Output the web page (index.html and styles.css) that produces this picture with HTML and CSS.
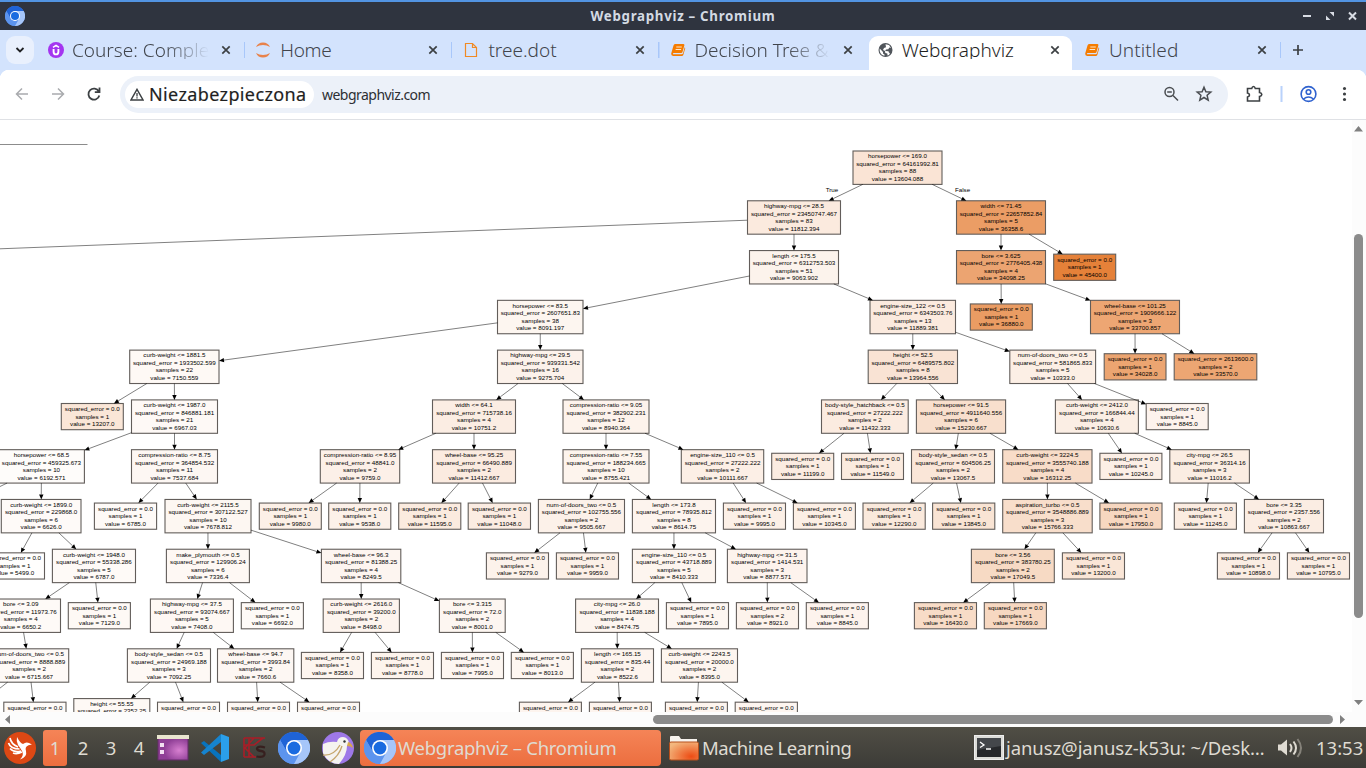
FILE: index.html
```html
<!DOCTYPE html>
<html lang="pl">
<head>
<meta charset="utf-8">
<title>Webgraphviz</title>
<link rel="stylesheet" href="styles.css">
</head>
<body>
<svg width="0" height="0" class="defs">
  <defs>
    <symbol id="chromium" viewBox="0 0 32 32">
      <circle cx="16" cy="16" r="16" fill="#669df6"/>
      <path d="M16 32A16 16 0 0 0 29.9 8H16z" fill="#a6c6fa"/>
      <path d="M2.1 8A16 16 0 0 1 29.9 8H16L9 20z" fill="#1f63d6"/>
      <path d="M2.1 8 9 20 22 21 16 32A16 16 0 0 1 2.1 8z" fill="#5c94ee"/>
      <circle cx="16" cy="16" r="8" fill="#fff"/>
      <circle cx="16" cy="16" r="6.4" fill="#1a6be0"/>
    </symbol>
    <symbol id="close" viewBox="0 0 10 10"><path d="M1.3 1.3 8.7 8.7M8.7 1.3 1.3 8.7" stroke="currentColor" stroke-width="1.7" fill="none"/></symbol>
    <symbol id="book" viewBox="0 0 16 16">
      <path d="M5 2h8.500q1.200.2.9 1.300L12.500 10q-.3 1-1.300 1H3.700q-1.300.4-.7 1.300h8.700q1 0 1.300-1l1.700-6q.8.5.4 1.500l-1.800 6.100q-.4 1.100-1.500 1.100H3.200q-2.300-.2-2-2.400L3.500 3.500Q3.900 2 5 2z" fill="#f57c00"/>
      <path d="M6.300 5h5.500M5.600 7.500h5.500" stroke="#ffe6c8" stroke-width="1"/>
    </symbol>
  </defs>
</svg>

<div class="screen">
  <header class="titlebar">
    <svg class="app-icon" width="20" height="20"><use href="#chromium"/></svg>
    <span class="window-title">Webgraphviz – Chromium</span>
    <svg class="window-buttons" width="62" height="16" viewBox="0 0 62 16" fill="none" stroke="#d8dce4">
      <path d="M4 8h8" stroke-width="2"/>
      <path d="M27 7.500v4.500h4.500zM30.500 4h4.500v4.500z" fill="#d8dce4" stroke="none"/>
      <path d="M50 4.500l7 7M57 4.500l-7 7" stroke-width="2"/>
    </svg>
  </header>

  <nav class="tabs">
    <div class="tab-search"><svg width="10" height="8" viewBox="0 0 10 8"><path d="M1.500 2 5 5.500 8.500 2" fill="none" stroke="#202124" stroke-width="1.800"/></svg></div>
    <div class="tab-list">
      <div class="tab">
        <svg class="favicon" width="16" height="16" viewBox="0 0 16 16"><circle cx="8" cy="8" r="8" fill="#a435f0"/><path d="M5.600 7v2.700q0 2.700 2.400 2.700t2.400-2.700V7" fill="none" stroke="#fff" stroke-width="1.900"/><path d="M5 5.300 8 3.400l3 1.900" fill="none" stroke="#fff" stroke-width="1.500"/></svg>
        <span class="tab-title fade">Course: Complete</span><svg class="close" width="10" height="10"><use href="#close"/></svg>
      </div>
      <div class="tab">
        <svg class="favicon" width="16" height="16" viewBox="0 0 16 16" fill="#e8824a"><path d="M1 5Q3 .5 8 .5T15 5Q12 3 8 3T1 5zM1 11q2 4.500 7 4.500t7-4.500Q12 13 8 13T1 11z"/></svg>
        <span class="tab-title tall t-home">Home</span><svg class="close" width="10" height="10"><use href="#close"/></svg>
      </div>
      <div class="tab">
        <svg class="favicon" width="16" height="16" viewBox="0 0 16 16"><path d="M3.500 1.500h7l4 4v9h-11zM10.500 1.500v4h4" fill="none" stroke="#f08a24" stroke-width="1.200"/></svg>
        <span class="tab-title tall t-dot">tree.dot</span><svg class="close" width="10" height="10"><use href="#close"/></svg>
      </div>
      <div class="tab nosep">
        <svg class="favicon" width="16" height="16"><use href="#book"/></svg>
        <span class="tab-title tall fade t-dec">Decision Tree &amp; R</span><svg class="close" width="10" height="10"><use href="#close"/></svg>
      </div>
      <div class="tab active nosep">
        <svg class="favicon" width="16" height="16" viewBox="0 0 16 16"><circle cx="8.500" cy="8" r="7" fill="#50555b"/><path d="M2.700 6.500 6 10v1.500l1.500 1v1.300Q3.500 13 2.700 9zM8.500 2.300l3.500.6 2 3-1.700-.3-1 1.600-2.300.3-.8 1.500 3.300.2.500 1.600 1 .2-1 2-1.500.5-.2-2-2-.5-.3-2-2-1 1-2 2-.7z" fill="#fff"/></svg>
        <span class="tab-title t-web">Webgraphviz</span><svg class="close" width="10" height="10"><use href="#close"/></svg>
      </div>
      <div class="tab">
        <svg class="favicon" width="16" height="16"><use href="#book"/></svg>
        <span class="tab-title tall t-unt">Untitled</span><svg class="close" width="10" height="10"><use href="#close"/></svg>
      </div>
    </div>
    <svg class="new-tab" width="12" height="12" viewBox="0 0 12 12"><path d="M6 1v10M1 6h10" stroke="#3c4043" stroke-width="1.700"/></svg>
  </nav>

  <div class="toolbar">
    <svg class="nav-icons" width="120" height="24" viewBox="0 0 120 24" fill="none" stroke-width="1.500">
      <g stroke="#a9abae"><path d="M28 12H17M22 6.500 16.500 12l5.500 5.500"/><path d="M52 12h11M58 6.500l5.500 5.500-5.500 5.500"/></g>
      <path d="M98.800 9.500A5.500 5.500 0 1 0 99.300 13.500M99.500 5.500v4.700h-4.700" stroke="#3c4043" stroke-width="1.800"/>
    </svg>
    <div class="omnibox">
      <div class="chip">
        <svg width="14" height="13" viewBox="0 0 14 13"><path d="M7 1.300 13 12H1z" fill="none" stroke="#3c4043" stroke-width="1.400"/><path d="M7 5v3.500M7 9.300v1.300" stroke="#3c4043" stroke-width="1.300"/></svg>
        <span class="chip-text">Niezabezpieczona</span>
      </div>
      <span class="url">webgraphviz.com</span>
      <svg class="omni-icons" width="50" height="18" viewBox="0 0 50 18" fill="none" stroke="#4a4d51" stroke-width="1.500">
        <circle cx="6.500" cy="7" r="4.500"/><path d="M10 10.500l5 5M4.200 7h4.600"/>
        <path d="M41 2.200 42.900 6.700 47.800 7.100 44.100 10.300 45.200 15.100 41 12.500 36.800 15.100 37.900 10.300 34.200 7.100 39.100 6.700z"/>
      </svg>
    </div>
    <svg class="ext" width="18" height="18" viewBox="0 0 18 18"><path d="M2 3.500h4.200q.6-2 1.800-2t1.800 2H14v4q2.300.5 2.300 2t-2.300 2v4.500H2v-4q2-.6 2-2.100T2 8z" fill="none" stroke="#3c4043" stroke-width="1.600"/></svg>
    <i class="bar"></i>
    <svg class="profile" width="18" height="18" viewBox="0 0 18 18" fill="none" stroke="#2f62cf" stroke-width="1.600"><circle cx="9" cy="9" r="7.400"/><circle cx="9" cy="7" r="2.300"/><path d="M4 14q5-4 10 0"/></svg>
    <svg class="menu" width="4" height="16" viewBox="0 0 4 16" fill="#3c4043"><circle cx="2" cy="2.500" r="1.600"/><circle cx="2" cy="8" r="1.600"/><circle cx="2" cy="13.500" r="1.600"/></svg>
  </div>

  <main class="page">
    <svg id="graph" class="graph" width="1352" height="592" viewBox="0 120 1352 592"></svg>
    <svg class="vscroll" width="14" height="592" viewBox="0 0 14 592"><path d="M2 11.500 6.500 6l4.500 5.500zM2 580l4.500 5 4.500-5z" fill="#808080"/><rect x="2" y="114" width="9" height="384" rx="4.500" fill="#8b8b8b"/></svg>
    <svg class="hscroll" width="1366" height="15" viewBox="0 0 1366 15"><path d="M10 3v9L5 7.500zM1340 3v9l5-4.500z" fill="#808080"/><rect x="653" y="3" width="680" height="9" rx="4.500" fill="#8b8b8b"/></svg>
  </main>

  <footer class="taskbar">
    <svg class="launcher" width="32" height="32" viewBox="0 0 32 32"><circle cx="16" cy="16" r="16" fill="#dd4814"/><path d="M14 13Q12 9 13 5q3 6 6 7 3-2.500 6-1l3 1.500-3.500.8Q20.500 15 22 19q1.500 6-6 8.500 4.500-4 2-8.500-2-3.500-4-6z" fill="#fff"/><path d="M6 6q1 6 8 9M4.500 11q2 6 11 6M6 16.500q4 4.500 11 2.500M9 21q4 1.500 9-1" fill="none" stroke="#fff" stroke-width="1.700"/></svg>
    <div class="desks"><span class="desk current">1</span><span class="desk">2</span><span class="desk">3</span><span class="desk">4</span></div>
    <div class="quick">
      <svg width="32" height="32" viewBox="0 0 32 32"><defs><radialGradient id="pg" cx=".7" cy=".6"><stop offset="0" stop-color="#d77fd0"/><stop offset="1" stop-color="#8f3f96"/></radialGradient></defs><rect x="1" y="4" width="30" height="24" fill="url(#pg)" stroke="#642c69"/><rect x="0" y="3" width="32" height="4" fill="#e9e5cf"/><path d="M3 11h4v4H3zM3 18h4v4H3z" fill="#f2dff2"/></svg>
      <svg width="28" height="28" viewBox="0 0 28 28"><path d="M0 9 3 7l17 14v7z" fill="#0873bd"/><path d="M20 0v8L3 21 0 18.500z" fill="#1684cf"/><path d="M20 0v28l8-3V3z" fill="#2b9fea"/></svg>
      <svg width="24" height="24" viewBox="0 0 24 24" fill="none"><path d="M2 2h21M2 2v19M12 2 3 12l9 9M2 9h10l9-7M7 3v18M2 21h12" stroke="#a91d27" stroke-width="1.600"/><path d="M23 11.500q-7-2-8 1 0 2 4 2.500 4 .6 3.500 3.500-1 3.500-8 2" stroke="#37201f" stroke-width="2.300"/></svg>
      <svg width="32" height="32"><use href="#chromium"/></svg>
      <svg width="32" height="32" viewBox="0 0 32 32"><circle cx="16" cy="16" r="16" fill="#9e78e8"/><path d="M1 12Q7 9 15 10q1-5 6-5 5 .5 6 6-1 2-2 3Q25 23 17 31.900 6 32 1 21z" fill="#f5f3f0"/><path d="M1 23Q12 24 18 13M8 30Q17 24 20 14" fill="none" stroke="#c5a66d" stroke-width="1.300"/><path d="M26 10q4 1 5 6-2-2-6-2z" fill="#d7a84b"/><circle cx="22.500" cy="9.500" r="1.200" fill="#333"/></svg>
    </div>
    <div class="task current"><svg width="32" height="32"><use href="#chromium"/></svg><span class="k-web">Webgraphviz – Chromium</span></div>
    <div class="task folder"><svg width="30" height="26" viewBox="0 0 30 26"><defs><radialGradient id="fg" cx=".75" cy=".8" r=".9"><stop offset="0" stop-color="#ed4c14"/><stop offset="1" stop-color="#f3b77e"/></radialGradient></defs><path d="M1 2q0-1 1-1h8l2 3h16v7H1z" fill="#f7f3ed"/><rect x=".5" y="7" width="29" height="18" rx="1.500" fill="url(#fg)" stroke="#b7501c"/></svg><span class="k-ml">Machine Learning</span></div>
    <div class="task term"><svg width="30" height="26" viewBox="0 0 30 26"><rect x=".5" y=".5" width="29" height="24" fill="#dcdcd8" stroke="#eee"/><rect x="3" y="3" width="24" height="19" fill="#26282b"/><path d="M3 3h24v8L3 15z" fill="#44474b"/><path d="M6 7l4 3-4 2.500M12 14h5" fill="none" stroke="#fff" stroke-width="1.300"/></svg><span class="k-term">janusz@janusz-k53u: ~/Desk…</span></div>
    <svg class="volume" width="26" height="22" viewBox="0 0 26 22" fill="none" stroke="#dfdbd2" stroke-width="2"><path d="M0 7.500v6h3l6 5V2.500l-6 5z" fill="#dfdbd2" stroke="none"/><path d="M12 7q3 4 0 8M15.500 4.500q5 6.500 0 13"/><path d="M19.500 2q7 9 0 18" stroke="#85827a"/></svg>
    <span class="clock">13:53</span>
  </footer>
</div>
<script src="tree.js"></script>
</body>
</html>
```

FILE: styles.css
```css
* { box-sizing: border-box; }
body { margin: 0; overflow: hidden; font-family: "Noto Sans", "Open Sans", sans-serif; }
.defs { position: absolute; }
.screen { width: 1366px; height: 768px; display: flex; flex-direction: column; background: #fff; overflow: hidden; }
svg { display: block; flex: none; }
span { white-space: nowrap; }

.titlebar { height: 30px; flex: none; border-top: 2px solid #5294e2; background: #2f343f; display: grid; grid-template-columns: 80px 1fr 80px; align-items: center; }
.app-icon { margin-left: 5px; }
.window-title { justify-self: center; color: #d3dae3; font-weight: 700; font-size: 13.300px; line-height: 28px; letter-spacing: .7px; }
.window-buttons { justify-self: end; margin-right: 5px; }

.tabs { height: 40px; flex: none; background: #d3e3fd; display: flex; align-items: center; }
.tab-search { width: 28px; height: 28px; margin: 0 4px 0 6px; border-radius: 9px; background: #e9f0fd; display: grid; place-items: center; }
.tab-list { display: flex; height: 40px; }
.tab { width: 207.200px; height: 40px; padding-left: 10px; display: flex; align-items: center; background: linear-gradient(#a8c7fa, #a8c7fa) right center / 1.500px 16px no-repeat; color: #41454c; }
.tab.nosep { background: none; }
.tab.active { color: #1f1f1f; background: #fff; height: 34px; margin: 6px 2px 0 2px; width: 203.200px; padding-left: 8px; padding-bottom: 6px; border-radius: 9px 9px 0 0; }
.tab-title { width: 137px; height: 17px; margin: 0 12px 0 8px; overflow: hidden; font-weight: 300; font-size: 19px; line-height: 17px; }
.tab-title.tall { height: 28px; line-height: 28px; }
.t-home { padding-left: 1px; letter-spacing: -.3px; }
.t-dot { padding-left: 2px; }
.t-dec { padding-left: 1px; }
.t-web { padding-left: 1px; }
.t-unt { padding-left: 1px; letter-spacing: .1px; }
.fade { -webkit-mask-image: linear-gradient(90deg, #000 68%, transparent 100%); mask-image: linear-gradient(90deg, #000 68%, transparent 100%); }
.close { color: #3c4043; }
.new-tab { margin-left: 11px; }

.toolbar { height: 50px; flex: none; display: flex; align-items: center; border-bottom: 1px solid #dfe1e5; padding-bottom: 1px; background: radial-gradient(circle at 9px 9px, #fff 9px, #d3e3fd 9.500px) 0 0 / 9px 9px no-repeat, radial-gradient(circle at 0 9px, #fff 9px, #d3e3fd 9.500px) 100% 0 / 9px 9px no-repeat, #fff; }
.omnibox { width: 1108px; height: 37px; border-radius: 18.500px; background: #ecf1f9; display: flex; align-items: center; padding-left: 5px; }
.chip { width: 189px; height: 27px; border-radius: 13.500px; background: #fff; display: flex; align-items: center; padding-left: 5px; gap: 5px; }
.chip-text { font-size: 18px; color: #1f1f1f; letter-spacing: .38px; -webkit-text-stroke: .2px #1f1f1f; }
.url { margin-left: 8px; font-size: 14px; color: #2c2f33; letter-spacing: -.53px; }
.omni-icons { margin-left: auto; margin-right: 15px; }
.ext { margin-left: 18px; }
.bar { width: 1.500px; height: 16px; margin-left: 17px; background: #b9d2fb; }
.profile { margin-left: 17px; }
.menu { margin-left: 25px; }
.ext, .bar, .profile, .menu { transform: translateX(-.5px); }

.page { height: 607px; flex: none; display: grid; grid-template-columns: 1352px 14px; grid-template-rows: 592px 15px; }
.graph { overflow: hidden; font-family: "Liberation Sans", Arial, sans-serif; font-size: 6.240px; }
.vscroll, .hscroll { background: #fcfcfc; }
.hscroll { grid-column: 1 / 3; }
.node { stroke: #625d5a; stroke-width: 1.100; }
.edge { stroke: #000; stroke-width: .5; fill: none; }
.label { text-anchor: middle; fill: #000; }

.taskbar { height: 41px; flex: none; background: linear-gradient(#504e45, #3c3b37); display: flex; align-items: center; color: #dfdbd2; font-size: 18.500px; }
.launcher { margin-left: 4px; }
.desks { display: flex; margin-left: 7px; gap: 4px; }
.desk { width: 24px; height: 36px; line-height: 35px; text-align: center; border-radius: 3px; }
.desk.current, .task.current { background: linear-gradient(#f58457, #ec6e3f); }
.quick { display: flex; align-items: center; margin-left: 6px; width: 197px; justify-content: space-between; }
.task { display: flex; align-items: center; height: 36px; }
.task.current { width: 301px; margin-left: 6px; padding-left: 4px; gap: 2px; border-radius: 4px; }
.folder { margin-left: 8px; gap: 3px; width: 305px; }
.term { gap: 2px; width: 304px; }
.k-web { letter-spacing: -.28px; }
.k-ml { letter-spacing: -.42px; }
.k-term { letter-spacing: -.08px; }
.clock { margin-left: 12px; }
```

FILE: tree.js
```js
const NS = "http://www.w3.org/2000/svg";
const svg = document.getElementById("graph");

// id, level, left, right, condition (empty for a leaf), squared_error, samples, value, parent
const rows = [
  ["a", 0, 853, 942, "horsepower <= 169.0", "64161992.81", 88, "13604.088", ""],
  ["b", 1, 747.5, 840.5, "highway-mpg <= 28.5", "23450747.467", 83, "11812.394", "a"],
  ["c", 1, 956.5, 1045.5, "width <= 71.45", "22657852.84", 5, "36358.6", "a"],
  ["d", 2, 749.5, 838.5, "length <= 175.5", "6312753.503", 51, "9063.902", "b"],
  ["e", 2, 956.5, 1045.5, "bore <= 3.625", "2776405.438", 4, "34098.25", "c"],
  ["f", 2, 1053.7, 1115.7, "", "0.0", 1, "45400.0", "c"],
  ["g", 3, 497.5, 583, "horsepower <= 83.5", "2607651.83", 38, "8091.197", "d"],
  ["h", 3, 870, 955.5, "engine-size_122 <= 0.5", "6343503.76", 13, "11889.381", "d"],
  ["i", 3, 970.3, 1032.3, "", "0.0", 1, "36880.0", "e"],
  ["j", 3, 1090.5, 1179.5, "wheel-base <= 101.25", "1909666.122", 3, "33700.857", "e"],
  ["k", 4, 129.7, 219, "curb-weight <= 1881.5", "1933502.599", 22, "7150.559", "g"],
  ["l", 4, 497.5, 583, "highway-mpg <= 29.5", "939331.542", 16, "9275.704", "g"],
  ["m", 4, 868.2, 957.5, "height <= 52.5", "6489575.802", 8, "13964.556", "h"],
  ["n", 4, 1009.8, 1095.6, "num-of-doors_two <= 0.5", "581865.833", 5, "10333.0", "h"],
  ["o", 4, 1104.2, 1166, "", "0.0", 1, "34028.0", "j"],
  ["p", 4, 1174.2, 1256.8, "", "2613600.0", 2, "33570.0", "j"],
  ["q", 5, 61.3, 123.3, "", "0.0", 1, "13207.0", "k"],
  ["r", 5, 131.5, 217.5, "curb-weight <= 1987.0", "846881.181", 21, "6967.03", "k"],
  ["s", 5, 432.5, 515.5, "width <= 64.1", "715738.16", 4, "10751.2", "l"],
  ["t", 5, 563, 649, "compression-ratio <= 9.05", "382902.231", 12, "8940.364", "l"],
  ["u", 5, 821.5, 908.2, "body-style_hatchback <= 0.5", "27222.222", 2, "11432.333", "m"],
  ["v", 5, 916.4, 1005.6, "horsepower <= 91.5", "4911640.556", 6, "15230.667", "m"],
  ["w", 5, 1055.4, 1138.4, "curb-weight <= 2412.0", "166844.44", 4, "10630.6", "n"],
  ["x", 5, 1146.2, 1208.2, "", "0.0", 1, "8845.0", "n"],
  ["y", 6, -1.5, 84.4, "horsepower <= 68.5", "459325.673", 10, "6192.571", "r"],
  ["z", 6, 131.5, 217.5, "compression-ratio <= 8.75", "364854.532", 11, "7537.684", "r"],
  ["A", 6, 320.3, 399.7, "compression-ratio <= 8.95", "48841.0", 2, "9759.0", "s"],
  ["B", 6, 432.5, 515.5, "wheel-base <= 95.25", "66490.889", 2, "11412.667", "s"],
  ["C", 6, 563, 649, "compression-ratio <= 7.55", "188234.665", 10, "8755.421", "t"],
  ["D", 6, 681.3, 763.7, "engine-size_110 <= 0.5", "27222.222", 2, "10111.667", "t"],
  ["E", 6, 771.7, 833.7, "", "0.0", 1, "11199.0", "u"],
  ["F", 6, 841.5, 903.5, "", "0.0", 1, "11549.0", "u"],
  ["G", 6, 911.5, 994.5, "body-style_sedan <= 0.5", "604506.25", 2, "13067.5", "v"],
  ["H", 6, 1002.7, 1092, "curb-weight <= 3224.5", "3555740.188", 4, "16312.25", "v"],
  ["I", 6, 1099.9, 1161.9, "", "0.0", 1, "10245.0", "w"],
  ["J", 6, 1169.8, 1249.4, "city-mpg <= 26.5", "36314.16", 3, "11016.2", "w"],
  ["K", 7, 1.3, 81, "curb-weight <= 1899.0", "229868.0", 6, "6626.0", "y"],
  ["L", 7, 94.4, 156.6, "", "0.0", 1, "6785.0", "z"],
  ["M", 7, 165, 251, "curb-weight <= 2115.5", "307122.527", 10, "7678.812", "z"],
  ["N", 7, 259.3, 321.3, "", "0.0", 1, "9980.0", "A"],
  ["O", 7, 328.7, 390.8, "", "0.0", 1, "9538.0", "A"],
  ["P", 7, 398.7, 460.8, "", "0.0", 1, "11595.0", "B"],
  ["Q", 7, 468.2, 530.5, "", "0.0", 1, "11048.0", "B"],
  ["R", 7, 538.4, 624.5, "num-of-doors_two <= 0.5", "102755.556", 2, "9505.667", "C"],
  ["S", 7, 632.4, 715.5, "length <= 173.8", "78935.812", 8, "8614.75", "C"],
  ["T", 7, 723.4, 785.5, "", "0.0", 1, "9995.0", "D"],
  ["U", 7, 793.4, 855.4, "", "0.0", 1, "10345.0", "D"],
  ["V", 7, 863, 925.2, "", "0.0", 1, "12290.0", "G"],
  ["W", 7, 932.6, 994.8, "", "0.0", 1, "13845.0", "G"],
  ["X", 7, 1002.7, 1092.2, "aspiration_turbo <= 0.5", "3548886.889", 3, "15766.333", "H"],
  ["Y", 7, 1099.9, 1162, "", "0.0", 1, "17950.0", "H"],
  ["Z", 7, 1174.3, 1236.4, "", "0.0", 1, "11245.0", "J"],
  ["a1", 7, 1244.4, 1323.5, "bore <= 3.35", "2357.556", 2, "10863.667", "J"],
  ["b1", 8, -17.3, 44.5, "", "0.0", 1, "5499.0", "K"],
  ["c1", 8, 52.4, 135.5, "curb-weight <= 1948.0", "55338.286", 5, "6787.0", "K"],
  ["d1", 8, 166.4, 249.4, "make_plymouth <= 0.5", "129906.24", 6, "7336.4", "M"],
  ["e1", 8, 321.4, 400.8, "wheel-base <= 96.3", "81388.25", 4, "8249.5", "M"],
  ["f1", 8, 486.4, 548.5, "", "0.0", 1, "9279.0", "R"],
  ["g1", 8, 556.4, 618.5, "", "0.0", 1, "9959.0", "R"],
  ["h1", 8, 632.4, 715.5, "engine-size_110 <= 0.5", "43718.889", 5, "8410.333", "S"],
  ["i1", 8, 727.4, 807, "highway-mpg <= 31.5", "1414.531", 3, "8877.571", "S"],
  ["j1", 8, 971.4, 1054.3, "bore <= 3.56", "383780.25", 2, "17049.5", "X"],
  ["k1", 8, 1062.4, 1124.5, "", "0.0", 1, "13200.0", "X"],
  ["l1", 8, 1217.4, 1279.5, "", "0.0", 1, "10898.0", "a1"],
  ["m1", 8, 1287.4, 1349.5, "", "0.0", 1, "10795.0", "a1"],
  ["n1", 9, -19, 60.5, "bore <= 3.09", "11973.76", 4, "6650.2", "c1"],
  ["o1", 9, 68.3, 130.4, "", "0.0", 1, "7129.0", "c1"],
  ["p1", 9, 150.4, 233.4, "highway-mpg <= 37.5", "93074.667", 5, "7408.0", "d1"],
  ["q1", 9, 241.3, 303.4, "", "0.0", 1, "6692.0", "d1"],
  ["r1", 9, 323.2, 399.4, "curb-weight <= 2616.0", "39200.0", 2, "8498.0", "e1"],
  ["s1", 9, 439.4, 505.2, "bore <= 3.315", "72.0", 2, "8001.0", "e1"],
  ["t1", 9, 575.6, 658.5, "city-mpg <= 26.0", "11838.188", 4, "8474.75", "h1"],
  ["u1", 9, 666.4, 728.5, "", "0.0", 1, "7895.0", "h1"],
  ["v1", 9, 736.4, 798.5, "", "0.0", 2, "8921.0", "i1"],
  ["w1", 9, 806.3, 868.4, "", "0.0", 1, "8845.0", "i1"],
  ["x1", 9, 914.4, 976.5, "", "0.0", 1, "16430.0", "j1"],
  ["y1", 9, 984.3, 1046.4, "", "0.0", 1, "17669.0", "j1"],
  ["z1", 10, -10.5, 68.7, "num-of-doors_two <= 0.5", "8888.889", 2, "6715.667", "n1"],
  ["a2", 10, 127.4, 210.5, "body-style_sedan <= 0.5", "24969.188", 3, "7092.25", "p1"],
  ["b2", 10, 217.5, 293.8, "wheel-base <= 94.7", "3993.84", 2, "7660.6", "p1"],
  ["c2", 10, 301.4, 363.5, "", "0.0", 1, "8358.0", "r1"],
  ["d2", 10, 371.4, 433.5, "", "0.0", 1, "8778.0", "r1"],
  ["e2", 10, 441.4, 503.5, "", "0.0", 1, "7995.0", "s1"],
  ["f2", 10, 511.3, 573.4, "", "0.0", 1, "8013.0", "s1"],
  ["g2", 10, 581.4, 653.5, "length <= 165.15", "835.44", 2, "8522.6", "t1"],
  ["h2", 10, 661.4, 737.5, "curb-weight <= 2243.5", "20000.0", 2, "8395.0", "t1"],
  ["i2", 11, 3.8, 66, "", "0.0", 1, "6766.0", "z1"],
  ["j2", 11, 73.8, 149.8, "height <= 55.55", "2352.25", 2, "7053.0", "a2"],
  ["k2", 11, 157.5, 219.5, "", "0.0", 1, "7150.0", "a2"],
  ["l2", 11, 227.5, 289.5, "", "0.0", 1, "7609.0", "b2"],
  ["m2", 11, 297.5, 359.5, "", "0.0", 1, "7738.0", "b2"],
  ["n2", 11, 519.4, 581.4, "", "0.0", 1, "8499.0", "g2"],
  ["o2", 11, 589.4, 651.4, "", "0.0", 1, "8558.0", "g2"],
  ["p2", 11, 665.4, 727.4, "", "0.0", 1, "8495.0", "h2"],
  ["q2", 11, 735.2, 797.4, "", "0.0", 1, "8195.0", "h2"],
  ["off1", 7, -92, -30, "", "0.0", 1, "5572.0", "y"],
  ["off2", 11, -66, -4, "", "0.0", 1, "6575.0", "z1"]
];

function add(tag, attrs, text) {
  const el = document.createElementNS(NS, tag);
  for (const k in attrs) el.setAttribute(k, attrs[k]);
  if (text) el.textContent = text;
  svg.appendChild(el);
}

// Interpolates white to orange with the predicted value.
function fill(value) {
  const t = Math.max(0, (value - 5118) / (45400 - 5118));
  return `rgb(${[26, 126, 198].map(d => Math.round(255 - d * t)).join(",")})`;
}

// Point where the ray from a box centre towards (tx, ty) leaves the box.
function clip(n, tx, ty) {
  const dx = tx - n.cx, dy = ty - n.cy;
  const k = Math.min(dx ? (n.w / 2) / Math.abs(dx) : 9, dy ? (n.h / 2) / Math.abs(dy) : 9);
  return [n.cx + dx * k, n.cy + dy * k];
}

function arrow(p, q) {
  const len = Math.hypot(q[0] - p[0], q[1] - p[1]);
  const ux = (q[0] - p[0]) / len, uy = (q[1] - p[1]) / len;
  const bx = q[0] - ux * 5, by = q[1] - uy * 5;
  add("path", { class: "edge", d: `M${p}L${bx},${by}` });
  add("polygon", { points: `${q} ${bx - uy * 2.2},${by + ux * 2.2} ${bx + uy * 2.2},${by - ux * 2.2}` });
}

const nodes = {};
for (const [id, level, l, r, cond, err, samples, value, parent] of rows) {
  const h = cond ? 33.4 : 26.2;
  const cy = 167.7 + level * 49.78;
  nodes[id] = { cx: (l + r) / 2, cy, w: r - l, h, l, r, parent, value,
    lines: [cond, `squared_error = ${err}`, `samples = ${samples}`, `value = ${value}`].filter(Boolean) };
}

add("path", { d: "M0 144.500H87.500", stroke: "#8c8c8c" });
add("path", { class: "edge", d: "M747.500 220.200 0 248.800" });
add("text", { class: "label", x: 832, y: 192.3 }, "True");
add("text", { class: "label", x: 962.5, y: 192.3 }, "False");

for (const n of Object.values(nodes)) {
  if (n.r < 0) continue;
  add("rect", { class: "node", x: n.l, y: n.cy - n.h / 2, width: n.w, height: n.h, fill: fill(n.value) });
  const first = n.cy - (n.lines.length - 1) * 3.75 + 1.9;
  n.lines.forEach((s, i) => { if (first + i * 7.5 < 716) add("text", { class: "label", x: n.cx, y: first + i * 7.5 }, s); });
}
for (const n of Object.values(nodes)) {
  const p = nodes[n.parent];
  if (p) arrow(clip(p, n.cx, n.cy), clip(n, p.cx, p.cy));
}
```
